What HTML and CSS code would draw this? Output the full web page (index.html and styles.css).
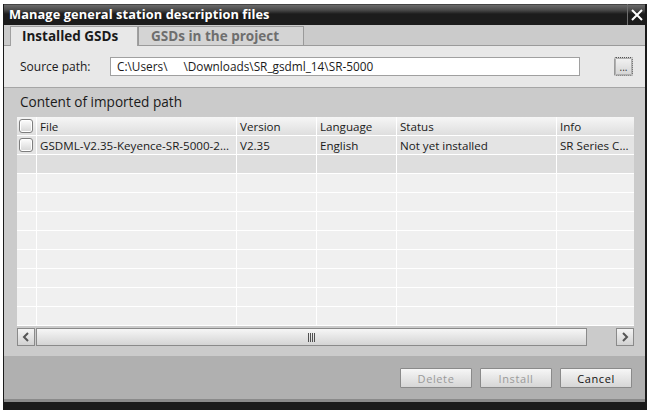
FILE: index.html
```html
<!DOCTYPE html>
<html lang="en">
<head>
<meta charset="utf-8">
<title>Manage general station description files</title>
<link rel="stylesheet" href="styles.css">
</head>
<body>
<div class="screen">
  <div class="dialog">
    <div class="titlebar">
      <span class="title">Manage general station description files</span>
      <span class="close">
        <svg width="12" height="12" viewBox="0 0 12 12"><path d="M1 1 L11 11 M11 1 L1 11" stroke="#fff" stroke-width="2" fill="none"/></svg>
      </span>
    </div>
    <div class="tabs">
      <div class="tab active">Installed GSDs</div>
      <div class="tab">GSDs in the project</div>
    </div>
    <div class="source">
      <span class="label">Source path:</span>
      <div class="input">C:\Users\<span class="redact"></span>\Downloads\SR_gsdml_14\SR-5000</div>
      <button class="browse">...</button>
    </div>
    <div class="content">
      <div class="heading">Content of imported path</div>
      <div class="grid">
        <div class="row head">
          <div class="cell chk"><span class="box"></span></div>
          <div class="cell">File</div>
          <div class="cell">Version</div>
          <div class="cell">Language</div>
          <div class="cell">Status</div>
          <div class="cell">Info</div>
        </div>
        <div class="row first">
          <div class="cell chk"><span class="box"></span></div>
          <div class="cell">GSDML-V2.35-Keyence-SR-5000-2...</div>
          <div class="cell">V2.35</div>
          <div class="cell">English</div>
          <div class="cell">Not yet installed</div>
          <div class="cell">SR Series C...</div>
        </div>
        <div class="row second"><div class="cell chk"></div><div class="cell"></div><div class="cell"></div><div class="cell"></div><div class="cell"></div><div class="cell"></div></div>
        <div class="row"><div class="cell chk"></div><div class="cell"></div><div class="cell"></div><div class="cell"></div><div class="cell"></div><div class="cell"></div></div>
        <div class="row"><div class="cell chk"></div><div class="cell"></div><div class="cell"></div><div class="cell"></div><div class="cell"></div><div class="cell"></div></div>
        <div class="row"><div class="cell chk"></div><div class="cell"></div><div class="cell"></div><div class="cell"></div><div class="cell"></div><div class="cell"></div></div>
        <div class="row"><div class="cell chk"></div><div class="cell"></div><div class="cell"></div><div class="cell"></div><div class="cell"></div><div class="cell"></div></div>
        <div class="row"><div class="cell chk"></div><div class="cell"></div><div class="cell"></div><div class="cell"></div><div class="cell"></div><div class="cell"></div></div>
        <div class="row"><div class="cell chk"></div><div class="cell"></div><div class="cell"></div><div class="cell"></div><div class="cell"></div><div class="cell"></div></div>
        <div class="row"><div class="cell chk"></div><div class="cell"></div><div class="cell"></div><div class="cell"></div><div class="cell"></div><div class="cell"></div></div>
        <div class="row"><div class="cell chk"></div><div class="cell"></div><div class="cell"></div><div class="cell"></div><div class="cell"></div><div class="cell"></div></div>
      </div>
      <div class="hscroll">
        <span class="sbtn">
          <svg width="8" height="10" viewBox="0 0 8 10"><path d="M6 1 L2 5 L6 9" stroke="#555" stroke-width="2" fill="none"/></svg>
        </span>
        <span class="thumb"><span class="grip"></span></span>
        <span class="sgap"></span>
        <span class="sbtn">
          <svg width="8" height="10" viewBox="0 0 8 10"><path d="M2 1 L6 5 L2 9" stroke="#555" stroke-width="2" fill="none"/></svg>
        </span>
      </div>
    </div>
    <div class="footer">
      <button class="btn disabled">Delete</button>
      <button class="btn disabled">Install</button>
      <button class="btn">Cancel</button>
    </div>
    <div class="bottom"></div>
  </div>
</div>
</body>
</html>
```

FILE: styles.css
```css
html, body {
  margin: 0;
  padding: 0;
  background: #ffffff;
  overflow: hidden;
}

.screen {
  width: 649px;
  height: 410px;
  padding: 4px 0 0 3px;
  box-sizing: border-box;
  font-family: "Open Sans", "Noto Sans", sans-serif;
  font-size: 11px;
  color: #1a1a1a;
}

.dialog {
  width: 644px;
  box-sizing: border-box;
  border-left: 1px solid #1a1a1a;
  border-right: 2px solid #1a1a1a;
  display: flex;
  flex-direction: column;
}

/* title bar */
.titlebar {
  height: 21px;
  display: flex;
  align-items: center;
  background: linear-gradient(#1e1e1e 0, #6a6a6a 1px, #4a4a4a 6px, #1c1c1c 10px, #1c1c1c 100%);
  color: #ffffff;
}
.title {
  flex: 1;
  padding-left: 5px;
  font-weight: 700;
  font-size: 12.8px;
  letter-spacing: 0.1px;
  line-height: 21px;
}
.close {
  width: 17px;
  height: 21px;
  border-left: 1px solid #6e6e6e;
  display: flex;
  align-items: center;
  justify-content: center;
}

/* tabs */
.tabs {
  height: 21px;
  box-sizing: border-box;
  background: #cbcbcb;
  border-bottom: 1px solid #9a9a9a;
  display: flex;
  align-items: flex-end;
  padding-left: 6px;
}
.tab {
  height: 19px;
  box-sizing: border-box;
  border: 1px solid #9a9a9a;
  border-bottom: none;
  background: #d4d4d4;
  color: #6e6e6e;
  font-weight: 700;
  font-size: 13.5px;
  line-height: 18px;
  padding: 0 0 0 12px;
  width: 166px;
  white-space: nowrap;
}
.tab.active {
  width: 128px;
  height: 20px;
  margin-bottom: -1px;
  padding-left: 11px;
  background: #e8e8e8;
  color: #1a1a1a;
  border-color: #a0a0a0;
}

/* source path */
.source {
  height: 42px;
  box-sizing: border-box;
  background: #e8e8e8;
  border-bottom: 1px solid #a6a6a6;
  display: flex;
  align-items: center;
  padding: 0 0 0 16px;
}
.label {
  width: 90px;
  font-size: 12px;
}
.input {
  width: 470px;
  height: 19px;
  box-sizing: border-box;
  background: #ffffff;
  border: 1px solid #a0a0a0;
  padding-left: 6px;
  font-size: 11.8px;
  line-height: 17px;
  white-space: nowrap;
}
.redact {
  display: inline-block;
  width: 16px;
}
.browse {
  margin-left: 34px;
  width: 19px;
  height: 19px;
  padding: 0;
  box-sizing: border-box;
  border: 1px dotted #555555;
  outline: 1px solid #b0b0b0;
  outline-offset: -2px;
  border-radius: 2px;
  background: linear-gradient(#f2f2f2, #d4d4d4);
  font-family: "Open Sans", sans-serif;
  font-size: 10px;
  line-height: 12px;
  color: #333;
}

/* content */
.content {
  height: 268px;
  box-sizing: border-box;
  background: #cbcbcb;
  padding: 4px 0 0 13px;
}
.heading {
  height: 25px;
  padding-left: 3px;
  font-size: 13.6px;
  line-height: 19px;
  color: #1a1a1a;
}
.grid {
  width: 617px;
  height: 209px;
  overflow: hidden;
  background: #ffffff;
  display: flex;
  flex-direction: column;
  gap: 1px;
}
.row {
  height: 18px;
  flex: none;
  display: grid;
  grid-template-columns: 19px 199px 79px 79px 159px 77px;
  column-gap: 1px;
}
.cell {
  background: #f0f0f0;
  padding: 1px 0 0 3px;
  font-size: 11.6px;
  line-height: 18px;
  white-space: nowrap;
  overflow: hidden;
}
.row.head .cell {
  background: linear-gradient(#f6f6f6, #dedede);
}
.row.first .cell {
  background: #e4e4e4;
}
.row.second .cell {
  background: #dedede;
}
.cell.chk {
  padding: 0 0 0 2px;
  display: flex;
  align-items: center;
}
.box {
  width: 14px;
  height: 14px;
  box-sizing: border-box;
  border: 1px solid #7e7e7e;
  border-radius: 3px;
  background: linear-gradient(#fdfdfd, #d6d6d6);
  box-shadow: inset 0 0 0 1px #ffffff;
}

/* horizontal scrollbar */
.hscroll {
  margin-top: 2px;
  width: 617px;
  height: 18px;
  display: flex;
}
.sbtn {
  width: 18px;
  height: 18px;
  box-sizing: border-box;
  border: 1px solid #8a8a8a;
  background: linear-gradient(#f4f4f4, #d2d2d2);
  display: flex;
  align-items: center;
  justify-content: center;
}
.thumb {
  margin-left: 1px;
  width: 551px;
  height: 18px;
  box-sizing: border-box;
  border: 1px solid #8a8a8a;
  background: linear-gradient(#f6f6f6, #d4d4d4);
  display: flex;
  align-items: center;
  justify-content: center;
}
.grip {
  width: 8px;
  height: 9px;
  background: repeating-linear-gradient(90deg, #505050 0, #505050 1px, transparent 1px, transparent 2px);
}
.sgap {
  flex: 1;
}

/* footer */
.footer {
  height: 43px;
  box-sizing: border-box;
  background: #b0b0b0;
  display: flex;
  justify-content: flex-end;
  align-items: flex-start;
  padding: 12px 13px 0 0;
  gap: 8px;
}
.btn {
  width: 72px;
  height: 20px;
  box-sizing: border-box;
  border: 1px solid #8a8a8a;
  border-radius: 1px;
  background: linear-gradient(#f6f6f6, #d6d6d6);
  font-family: "Open Sans", sans-serif;
  font-size: 11px;
  letter-spacing: 0.6px;
  color: #111;
  padding: 0;
}
.btn.disabled {
  color: #9a9a9a;
}

.bottom {
  height: 10px;
  border-top: 3px solid #8a8a8a;
  background: #1a1a1a;
}
```
